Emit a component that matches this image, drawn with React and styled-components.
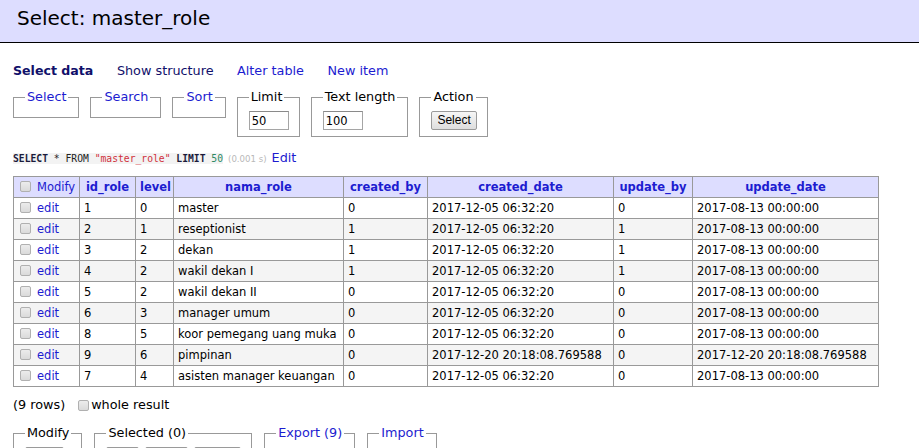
import React from "react";
import styled, { createGlobalStyle } from "styled-components";

const LINK = "#1c1cd0";
const VISITED = "#10106a";

const GlobalStyle = createGlobalStyle`
  body {
    margin: 0;
    background: #fff;
    color: #000;
    font: 12.8px/16px "DejaVu Sans", Verdana, sans-serif;
  }
`;

const Title = styled.h2`
  margin: 0;
  height: 43px;
  box-sizing: border-box;
  padding: 6px 17px 0;
  background: #ddf;
  border-bottom: 1px solid #000;
  font-size: 20px;
  line-height: 24px;
  font-weight: normal;
`;

const Content = styled.div`
  padding: 20px 13px 0;
`;

const Nav = styled.p`
  display: flex;
  gap: 23.5px;
  margin: 0;
`;

const NavLink = styled.a`
  color: ${(p) => (p.$active || p.$visited ? VISITED : LINK)};
  font-weight: ${(p) => (p.$active ? "bold" : "normal")};
  font-size: ${(p) => (p.$active ? "12.6px" : "inherit")};
  text-decoration: none;
`;

const FieldRow = styled.div`
  display: flex;
  align-items: flex-start;
  gap: ${(p) => p.$gap}px;
  margin-top: ${(p) => p.$top}px;
`;

const Fieldset = styled.fieldset`
  margin: 0;
  min-width: 0;
  padding: 6px 10px 6px 11px;
  border: 1px solid #999;
  display: flex;
  gap: 6px;
`;

const Legend = styled.legend`
  padding: 0 2px;
  line-height: 16px;
  color: ${(p) => (p.$link ? LINK : "#000")};
`;

const TextInput = styled.input`
  width: 40px;
  height: 19px;
  box-sizing: border-box;
  margin: 0;
  padding: 1px 2px;
  border: 1px solid #a5a5a5;
  border-top-color: #8a8a8a;
  font: 11.5px "DejaVu Sans", Verdana, sans-serif;
  color: #000;
`;

const Button = styled.button`
  height: 19px;
  margin: 0;
  padding: 0 5px;
  border: 1px solid #9a9a9a;
  border-radius: 2px;
  background: linear-gradient(#f6f6f6, #dedede);
  font: 12px/15px "Liberation Sans", Arial, sans-serif;
  color: #000;
`;

const SqlLine = styled.p`
  margin: 13px 0 0;
  display: flex;
  align-items: baseline;
  gap: 5px;
`;

const Code = styled.code`
  font: 9.7px "DejaVu Sans Mono", monospace;
  background: #f3f3f3;
  color: #222;
`;

const Kw = styled.span`
  font-weight: bold;
  color: #1a1a3a;
`;

const Str = styled.span`
  color: #d0303a;
`;

const Num = styled.span`
  color: #2e8a64;
`;

const Time = styled.span`
  font-size: 8.6px;
  color: #b8b8b8;
`;

const Link = styled.a`
  color: ${LINK};
  text-decoration: none;
  font-weight: ${(p) => (p.$bold ? "bold" : "normal")};
`;

const Table = styled.table`
  margin-top: 9px;
  width: 865px;
  table-layout: fixed;
  border-collapse: collapse;
  font-size: 11.5px;
`;

const Col = styled.col`
  width: ${(p) => p.$w}px;
`;

const Th = styled.th`
  background: #ddf;
  border: 1px solid #999;
  padding: 2px 4px;
  line-height: 16px;
  text-align: ${(p) => (p.$left ? "left" : "center")};
  white-space: nowrap;
  font-weight: normal;
`;

const Tr = styled.tr`
  background: ${(p) => (p.$odd ? "#f4f4f4" : "#fff")};
`;

const Td = styled.td`
  border: 1px solid #999;
  padding: 2px 4px;
  line-height: 16px;
  white-space: nowrap;
  overflow: hidden;
`;

const Check = styled.span`
  display: inline-block;
  width: 11px;
  height: 11px;
  box-sizing: border-box;
  margin: 0 ${(p) => p.$after}px 0 ${(p) => p.$before}px;
  vertical-align: -1px;
  border: 1px solid #b0b0b0;
  border-radius: 2px;
  background: linear-gradient(#ececec, #dadada);
`;

const RowsLine = styled.p`
  margin: 10px 0 0;
  display: flex;
  align-items: center;
`;

const columns = [
  { name: "id_role", w: 56 },
  { name: "level", w: 38 },
  { name: "nama_role", w: 170 },
  { name: "created_by", w: 84 },
  { name: "created_date", w: 186 },
  { name: "update_by", w: 79 },
  { name: "update_date", w: 186 },
];

const d1 = "2017-12-05 06:32:20";
const d2 = "2017-08-13 00:00:00";
const d3 = "2017-12-20 20:18:08.769588";

const rows = [
  ["1", "0", "master", "0", d1, "0", d2],
  ["2", "1", "reseptionist", "1", d1, "1", d2],
  ["3", "2", "dekan", "1", d1, "1", d2],
  ["4", "2", "wakil dekan I", "1", d1, "1", d2],
  ["5", "2", "wakil dekan II", "0", d1, "0", d2],
  ["6", "3", "manager umum", "0", d1, "0", d2],
  ["8", "5", "koor pemegang uang muka", "0", d1, "0", d2],
  ["9", "6", "pimpinan", "0", d3, "0", d3],
  ["7", "4", "asisten manager keuangan", "0", d1, "0", d2],
];

export default function App() {
  return (
    <>
      <GlobalStyle />
      <Title>Select: master_role</Title>
      <Content>
        <Nav>
          <NavLink $active>Select data</NavLink>
          <NavLink $visited>Show structure</NavLink>
          <NavLink>Alter table</NavLink>
          <NavLink>New item</NavLink>
        </Nav>

        <FieldRow $gap={11} $top={10}>
          <Fieldset>
            <Legend $link>Select</Legend>
          </Fieldset>
          <Fieldset>
            <Legend $link>Search</Legend>
          </Fieldset>
          <Fieldset>
            <Legend $link>Sort</Legend>
          </Fieldset>
          <Fieldset>
            <Legend>Limit</Legend>
            <TextInput defaultValue="50" />
          </Fieldset>
          <Fieldset>
            <Legend>Text length</Legend>
            <TextInput defaultValue="100" />
          </Fieldset>
          <Fieldset>
            <Legend>Action</Legend>
            <Button>Select</Button>
          </Fieldset>
        </FieldRow>

        <SqlLine>
          <Code>
            <Kw>SELECT</Kw> * FROM <Str>"master_role"</Str> <Kw>LIMIT</Kw> <Num>50</Num>
          </Code>
          <Time>(0.001 s)</Time>
          <Link>Edit</Link>
        </SqlLine>

        <Table>
          <colgroup>
            <Col $w={66} />
            {columns.map((c) => (
              <Col key={c.name} $w={c.w} />
            ))}
          </colgroup>
          <thead>
            <tr>
              <Th $left>
                <Check $before={2} $after={6} />
                <Link>Modify</Link>
              </Th>
              {columns.map((c) => (
                <Th key={c.name}>
                  <Link $bold>{c.name}</Link>
                </Th>
              ))}
            </tr>
          </thead>
          <tbody>
            {rows.map((r, i) => (
              <Tr key={i} $odd={i % 2 === 1}>
                <Td>
                  <Check $before={2} $after={6} />
                  <Link>edit</Link>
                </Td>
                {r.map((v, j) => (
                  <Td key={j}>{v}</Td>
                ))}
              </Tr>
            ))}
          </tbody>
        </Table>

        <RowsLine>
          (9 rows)
          <Check $before={13} $after={2} />
          whole result
        </RowsLine>

        <FieldRow $gap={12} $top={12}>
          <Fieldset>
            <Legend>Modify</Legend>
            <Button>Save</Button>
          </Fieldset>
          <Fieldset>
            <Legend>Selected (0)</Legend>
            <Button>Edit</Button>
            <Button>Clone</Button>
            <Button>Delete</Button>
          </Fieldset>
          <Fieldset>
            <Legend $link>Export (9)</Legend>
          </Fieldset>
          <Fieldset>
            <Legend $link>Import</Legend>
          </Fieldset>
        </FieldRow>
      </Content>
    </>
  );
}
